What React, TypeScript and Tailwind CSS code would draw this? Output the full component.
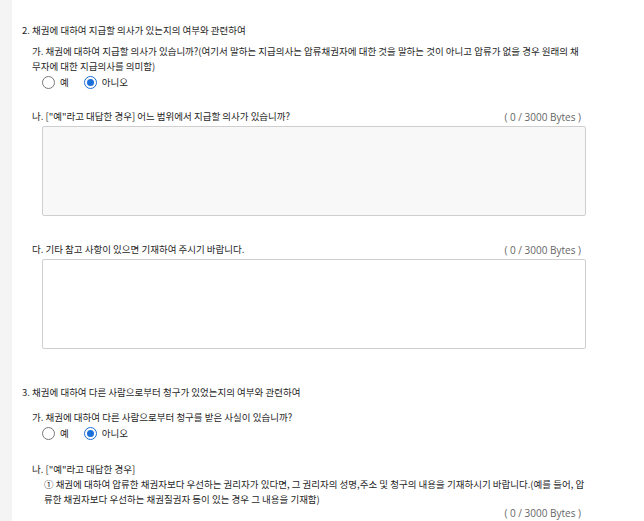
import React from "react";

const kr = { fontFamily: '"Noto Sans CJK KR", "Noto Sans", sans-serif' };
const en = { fontFamily: '"Open Sans", "Noto Sans", sans-serif' };

function Radio({ label, checked }: { label: string; checked?: boolean }) {
  return (
    <label className="flex items-center gap-[5px]">
      {checked ? (
        <span className="flex h-[13px] w-[13px] items-center justify-center rounded-full border-[1.5px] border-[#1a6fd9] bg-white">
          <span className="h-[7px] w-[7px] rounded-full bg-[#1a6fd9]" />
        </span>
      ) : (
        <span className="h-[13px] w-[13px] rounded-full border border-[#777] bg-white" />
      )}
      <span>{label}</span>
    </label>
  );
}

function Bytes() {
  return (
    <span className="mr-[11px] text-[10px] leading-[13px] text-[#666]" style={en}>
      ( 0 / 3000 Bytes )
    </span>
  );
}

function Area({ disabled, className }: { disabled?: boolean; className?: string }) {
  return (
    <div
      className={
        "mr-[6px] h-[90px] rounded-[2px] border border-[#cfcfcf] " +
        (disabled ? "bg-[#f8f8f8] " : "bg-white ") +
        (className ?? "")
      }
    />
  );
}

export default function App() {
  return (
    <div className="flex h-[521px] w-full overflow-hidden bg-white text-[9.5px] leading-[15px] text-[#262626]" style={kr}>
      <div className="w-[12px] shrink-0 bg-[#f4f4f4]" />
      <div className="flex-1 pl-[10px] pr-[52px]">
        {/* section 2 */}
        <div className="pt-[23px]">
          <p>2. 채권에 대하여 지급할 의사가 있는지의 여부와 관련하여</p>
          <div className="mt-[6px] pl-[10px]">
            <p className="mr-[7px]">
              가. 채권에 대하여 지급할 의사가 있습니까?(여기서 말하는 지급의사는 압류채권자에 대한 것을 말하는 것이 아니고 압류가 없을 경우 원래의 채무자에 대한 지급의사를 의미함)
            </p>
            <div className="mt-[1px] flex gap-[15px] pl-[10px]">
              <Radio label="예" />
              <Radio label="아니오" checked />
            </div>

            <div className="mt-[19px] flex items-end justify-between">
              <p>나. ["예"라고 대답한 경우] 어느 범위에서 지급할 의사가 있습니까?</p>
              <Bytes />
            </div>
            <Area disabled className="ml-[10px] mt-[2px]" />

            <div className="mt-[26px] flex items-end justify-between">
              <p>다. 기타 참고 사항이 있으면 기재하여 주시기 바랍니다.</p>
              <Bytes />
            </div>
            <Area className="ml-[10px] mt-[2px]" />
          </div>
        </div>

        {/* section 3 */}
        <div className="pt-[36px]">
          <p>3. 채권에 대하여 다른 사람으로부터 청구가 있었는지의 여부와 관련하여</p>
          <div className="mt-[10px] pl-[10px]">
            <p>가. 채권에 대하여 다른 사람으로부터 청구를 받은 사실이 있습니까?</p>
            <div className="mt-[1px] flex gap-[15px] pl-[10px]">
              <Radio label="예" />
              <Radio label="아니오" checked />
            </div>

            <p className="mt-[21px]">나. ["예"라고 대답한 경우]</p>
            <p className="pl-[12px]">
              ① 채권에 대하여 압류한 채권자보다 우선하는 권리자가 있다면, 그 권리자의 성명,주소 및 청구의 내용을 기재하시기 바랍니다.(예를 들어, 압류한 채권자보다 우선하는 채권질권자 등이 있는 경우 그 내용을 기재함)
            </p>
            <div className="flex justify-end">
              <Bytes />
            </div>
            <Area className="ml-[20px] mt-[3px]" />
          </div>
        </div>
      </div>
    </div>
  );
}
